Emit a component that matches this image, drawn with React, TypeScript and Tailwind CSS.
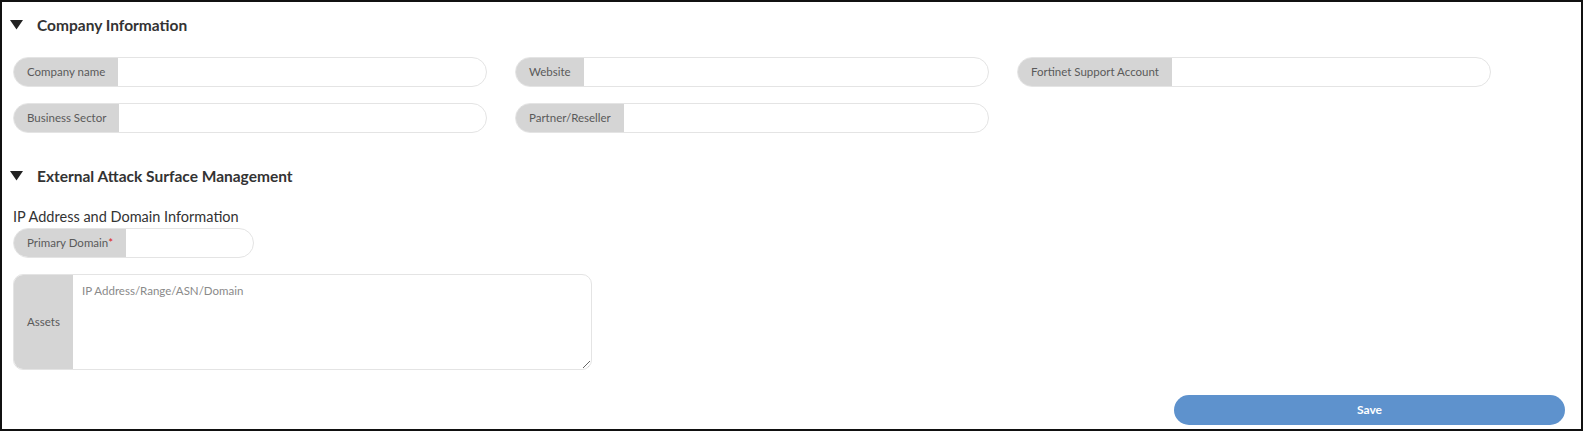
import React from "react";

const Caret: React.FC = () => (
    <svg width="13" height="10" viewBox="0 0 13 10" className="shrink-0">
        <polygon points="0,0 13,0 6.5,9.5" fill="#222" />
    </svg>
);

const SectionTitle: React.FC<{ title: string }> = (props) => (
    <div className="flex items-center h-[20px] -ml-[3px]">
        <Caret />
        <span className="ml-[14px] text-[15.5px] font-bold text-[#333] leading-[20px]">{props.title}</span>
    </div>
);

const Field: React.FC<{ label: string; required?: boolean; className?: string }> = (props) => (
    <div className={"flex h-[30px] rounded-full border border-[#e4e4e4] overflow-hidden bg-white " + (props.className ?? "")}>
        <div className="flex items-center bg-[#d5d5d5] px-[13px] text-[11.5px] text-[#5a5a5a] whitespace-nowrap">
            {props.label}
            {props.required && <span className="text-[#e0201b]">*</span>}
        </div>
        <input className="flex-1 min-w-0 outline-none px-2 text-[12px] text-[#333]" />
    </div>
);

export default function App() {
    return (
        <div
            className="w-[1583px] h-[431px] border-2 border-[#111] bg-white pl-[11px] pr-[16px] pt-[13px] flex flex-col"
            style={{ fontFamily: "Lato, 'Open Sans', sans-serif" }}
        >
            <SectionTitle title="Company Information" />

            <div className="grid grid-cols-[474px_474px_474px] gap-x-[28px] gap-y-[16px] mt-[22px]">
                <Field label="Company name" />
                <Field label="Website" />
                <Field label="Fortinet Support Account" />
                <Field label="Business Sector" />
                <Field label="Partner/Reseller" />
            </div>

            <div className="mt-[33px]">
                <SectionTitle title="External Attack Surface Management" />
            </div>

            <div className="mt-[22px] mb-[2px] text-[14.5px] leading-[18px] text-[#333]">IP Address and Domain Information</div>
            <Field label="Primary Domain" required className="w-[241px]" />

            <div className="mt-[16px] flex w-[579px] h-[96px] rounded-[10px] border border-[#e4e4e4] overflow-hidden">
                <div className="w-[59px] shrink-0 bg-[#d5d5d5] flex items-center justify-center text-[11.5px] text-[#5a5a5a]">
                    Assets
                </div>
                <textarea
                    className="flex-1 outline-none pl-[9px] pt-[7px] text-[11.5px] text-[#333] placeholder:text-[#8a8a8a]"
                    placeholder="IP Address/Range/ASN/Domain"
                />
            </div>

            <div className="flex justify-end mt-[25px]">
                <button className="w-[391px] h-[30px] rounded-full bg-[#5e92cd] text-white text-[12px] font-bold">
                    Save
                </button>
            </div>
        </div>
    );
}
